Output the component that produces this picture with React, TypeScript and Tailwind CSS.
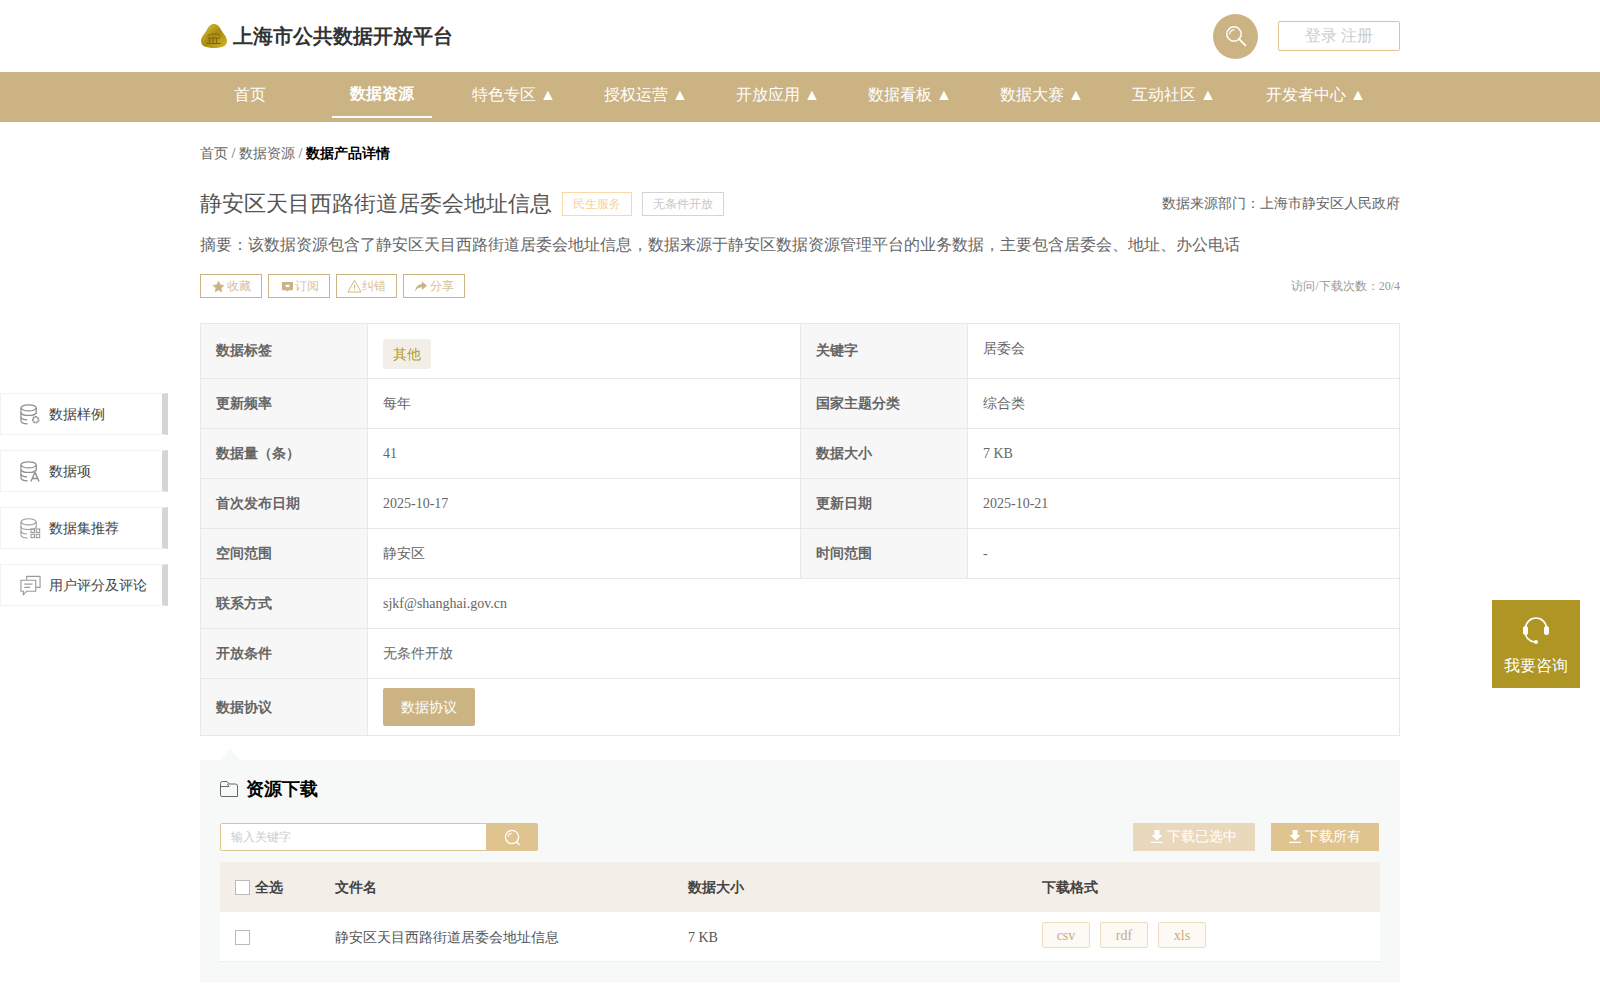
const navItems = [
  { label: "首页", w: "w-[100px]" },
  { label: "数据资源", w: "w-[100px]", active: true },
  { label: "特色专区 ▲", w: "w-[100px]" },
  { label: "授权运营 ▲", w: "w-[100px]" },
  { label: "开放应用 ▲", w: "w-[100px]" },
  { label: "数据看板 ▲", w: "w-[100px]" },
  { label: "数据大赛 ▲", w: "w-[100px]" },
  { label: "互动社区 ▲", w: "w-[100px]" },
  { label: "开发者中心 ▲", w: "w-[120px]" },
];

const DbBase = () => (
  <>
    <ellipse cx="9" cy="4" rx="8" ry="3.2" />
    <path d="M1 4v13.500c0 1.800 3 3.200 7 3.400" />
    <path d="M17 4v6" />
    <path d="M1 8.800c0 1.800 3.600 3.200 8 3.200s8-1.400 8-3.200" />
    <path d="M1 13.600c0 1.600 2.800 2.900 6.500 3.100" />
  </>
);

const IconSample = () => (
  <svg viewBox="0 0 22 22" fill="none" stroke="#8f8f8f" strokeWidth="1.3" className="size-[21px]">
    <DbBase />
    <circle cx="16.500" cy="16.500" r="3" strokeWidth="1.900" strokeDasharray="2 0.6" />
  </svg>
);

const IconItem = () => (
  <svg viewBox="0 0 22 22" fill="none" stroke="#8f8f8f" strokeWidth="1.3" className="size-[21px]">
    <DbBase />
    <path d="M11.500 21.500l3.800-9h.8l3.800 9M12.900 18.300h5.600" strokeWidth="1.500" />
  </svg>
);

const IconGrid = () => (
  <svg viewBox="0 0 22 22" fill="none" stroke="#9a9a9a" strokeWidth="1.100" className="size-[21px]">
    <DbBase />
    <rect x="11.500" y="11.500" width="3.600" height="3.600" />
    <rect x="17" y="11.500" width="3.600" height="3.600" />
    <rect x="11.500" y="17" width="3.600" height="3.600" />
    <rect x="17" y="17" width="3.600" height="3.600" />
  </svg>
);

const IconComment = () => (
  <svg viewBox="0 0 22 22" fill="none" stroke="#9a9a9a" strokeWidth="1.200" className="size-[21px]">
    <path d="M7 5V1.500h14V13h-4" />
    <path d="M1 5.500h15.500v11.500H7l-3.500 3.500V17H1z" />
    <path d="M4.500 9.500h8.500M4.500 13h6" />
  </svg>
);

const sideItems = [
  { label: "数据样例", icon: <IconSample /> },
  { label: "数据项", icon: <IconItem /> },
  { label: "数据集推荐", icon: <IconGrid /> },
  { label: "用户评分及评论", icon: <IconComment /> },
];

const Download = () => (
  <svg viewBox="0 0 12 13" fill="#fff" className="w-[12px] h-[13px]">
    <path d="M3.500 0h5v5h3L6 10.500 .5 5h3z" />
    <path d="M0 11.700h12V13H0z" />
  </svg>
);

const Loupe = ({ className }: { className: string }) => (
  <svg viewBox="0 0 22 22" fill="none" stroke="#fff" strokeLinecap="round" className={className}>
    <circle cx="9" cy="9" r="7.200" strokeWidth="1.500" />
    <path d="M4.800 9a4.200 4.200 0 0 1 4.200-4.200" strokeWidth="1.200" />
    <path d="M14.400 14.400l6 6" strokeWidth="1.800" />
  </svg>
);

const SmallLoupe = () => (
  <svg viewBox="0 0 18 18" fill="none" stroke="#fff" strokeLinecap="round" className="size-[17px]">
    <circle cx="8.500" cy="8.500" r="7" strokeWidth="1.400" />
    <path d="M4.500 8a4 4 0 0 1 3.500-3.500" strokeWidth="1.100" />
    <path d="M13.500 14l2.500 2.500" strokeWidth="1.400" />
  </svg>
);

const Label = ({ children, className = "" }: { children: React.ReactNode; className?: string }) => (
  <div className={`w-[167px] shrink-0 bg-[#f7f7f7] pl-[15px] font-bold text-[#666] flex items-center border-r border-[#e8e8e8] ${className}`}>
    {children}
  </div>
);

const Value = ({ children, className = "" }: { children: React.ReactNode; className?: string }) => (
  <div className={`pl-[15px] text-[#666] flex items-center ${className}`}>{children}</div>
);

const rows = [
  ["更新频率", "每年", "国家主题分类", "综合类"],
  ["数据量（条）", "41", "数据大小", "7 KB"],
  ["首次发布日期", "2025-10-17", "更新日期", "2025-10-21"],
  ["空间范围", "静安区", "时间范围", "-"],
];

const App = () => {
  return (
    // no CJK family named on purpose: the browser's own fallback is what gives the centred ：and ，of the picture
    <div className="relative min-h-[1000px] bg-white text-[14px] text-[#666] font-['Liberation_Serif',serif]">
      {/* Header */}
      <header className="w-[1200px] mx-auto h-[72px] flex items-center justify-between">
        <div className="flex items-center">
          <svg viewBox="0 0 28 26" className="w-[28px] h-[26px] mr-[5px]">
            <defs>
              <linearGradient id="gold" x1="0" y1="0" x2="1" y2="1">
                <stop offset="0" stopColor="#e4c93a" />
                <stop offset="0.5" stopColor="#a98a12" />
                <stop offset="1" stopColor="#d6b52a" />
              </linearGradient>
            </defs>
            <path d="M14 1c3.500 0 5.500 2.500 7.500 6.500 2 3.500 5.500 6.500 5.500 10.500 0 5-5 7-13 7S1 23 1 18c0-4 3.500-7 5.500-10.500C8.500 3.500 10.500 1 14 1z" fill="url(#gold)" />
            <path d="M7 13.500c2-3.500 12-3.500 14 0M8 15h12M9.500 15v5M13 15v5M16.500 15v5M7 20.500h14" stroke="#7d650f" strokeWidth="1" fill="none" />
          </svg>
          <span className="text-[20px] font-bold text-[#333]">上海市公共数据开放平台</span>
        </div>
        <div className="flex items-center">
          <div className="size-[45px] rounded-full bg-[#cbb384] flex items-center justify-center mr-[20px]">
            <Loupe className="size-[22px]" />
          </div>
          <div className="w-[122px] h-[30px] border border-[#e0c48f] rounded-[2px] flex items-center justify-center text-[16px] text-[#ccc]">
            登录 注册
          </div>
        </div>
      </header>

      {/* Nav */}
      <nav className="h-[50px] bg-[#cbb384]">
        <ul className="w-[1200px] mx-auto h-full flex gap-[32px]">
          {navItems.map((item) => (
            <li
              key={item.label}
              className={`${item.w} shrink-0 h-[46px] flex items-center justify-center whitespace-nowrap text-[16px] text-white ${
                item.active ? "font-bold border-b-2 border-white" : ""
              }`}
            >
              {item.label}
            </li>
          ))}
        </ul>
      </nav>

      <main className="w-[1200px] mx-auto">
        {/* Breadcrumb */}
        <div className="pt-[22px] leading-[20px]">
          首页 / 数据资源 / <span className="font-bold text-black">数据产品详情</span>
        </div>

        {/* Title */}
        <div className="mt-[24px] h-[30px] flex items-center">
          <h1 className="text-[22px] text-[#555] mr-[10px]">静安区天目西路街道居委会地址信息</h1>
          <span className="h-[24px] mt-[2px] px-[10px] border border-[#fad9a6] text-[12px] text-[#f7d39c] flex items-center mr-[10px]">民生服务</span>
          <span className="h-[24px] mt-[2px] px-[10px] border border-[#d4d4d4] text-[12px] text-[#c8c8c8] flex items-center">无条件开放</span>
          <span className="ml-auto text-[#666]">数据来源部门：上海市静安区人民政府</span>
        </div>

        {/* Summary */}
        <p className="mt-[14px] text-[16px] leading-[26px] text-[#666]">
          摘要：该数据资源包含了静安区天目西路街道居委会地址信息，数据来源于静安区数据资源管理平台的业务数据，主要包含居委会、地址、办公电话
        </p>

        {/* Actions */}
        <div className="mt-[16px] h-[24px] flex items-center gap-[6px] text-[12px] text-[#d5c19b]">
          <span className="w-[62px] h-[24px] border border-[#cbb384] flex items-center justify-center gap-[2px]">
            <svg viewBox="0 0 24 24" fill="#cbb384" className="size-[13px]">
              <path d="M12 1.500l3.400 6.900 7.600 1.100-5.500 5.400 1.300 7.600-6.800-3.600-6.800 3.600 1.300-7.600L1 9.500l7.600-1.100z" />
            </svg>
            收藏
          </span>
          <span className="w-[62px] h-[24px] pl-[2px] border border-[#cbb384] flex items-center justify-center gap-[2px]">
            <svg viewBox="0 0 12 12" className="size-[11px]">
              <path fillRule="evenodd" fill="#cbb384" d="M0 1h12v9H7.500L6 11.500 4.500 10H0zM4 4v2.500h4V4z" />
            </svg>
            订阅
          </span>
          <span className="w-[61px] h-[24px] border border-[#cbb384] flex items-center justify-center">
            <svg viewBox="0 0 16 15" fill="none" stroke="#cbb384" strokeWidth="1" className="w-[15px] h-[14px]">
              <path d="M8 1.500L15 14H1z" />
              <path d="M8 6v4.500M8 11.500v1" />
            </svg>
            纠错
          </span>
          <span className="w-[62px] h-[24px] pl-[1px] border border-[#cbb384] flex items-center justify-center gap-[3px]">
            <svg viewBox="0 0 14 12" fill="#cbb384" className="w-[12px] h-[11px]">
              <path d="M8 0l6 5-6 5V7C5 7 2.500 8 0 11.500 .8 6.500 3.500 3.500 8 3z" />
            </svg>
            分享
          </span>
          <span className="ml-auto text-[#999]">访问/下载次数：20/4</span>
        </div>

        {/* Detail table */}
        <div className="mt-[25px] border border-[#e8e8e8] border-b-0">
          <div className="flex h-[55px] border-b border-[#e8e8e8]">
            <Label className="pb-[2px]">数据标签</Label>
            <Value className="w-[433px] border-r border-[#e8e8e8]">
              <span className="w-[48px] h-[30px] mt-[6px] rounded-[3px] bg-[#f3efe8] text-[#b49a2a] flex items-center justify-center">其他</span>
            </Value>
            <Label className="pb-[2px]">关键字</Label>
            <Value className="flex-1"><span className="-mt-[5px]">居委会</span></Value>
          </div>
          {rows.map((r) => (
            <div key={r[0]} className="flex h-[50px] border-b border-[#e8e8e8]">
              <Label>{r[0]}</Label>
              <Value className="w-[433px] border-r border-[#e8e8e8]">{r[1]}</Value>
              <Label>{r[2]}</Label>
              <Value className="flex-1">{r[3]}</Value>
            </div>
          ))}
          <div className="flex h-[50px] border-b border-[#e8e8e8]">
            <Label>联系方式</Label>
            <Value className="flex-1">sjkf@shanghai.gov.cn</Value>
          </div>
          <div className="flex h-[50px] border-b border-[#e8e8e8]">
            <Label>开放条件</Label>
            <Value className="flex-1">无条件开放</Value>
          </div>
          <div className="flex h-[57px] border-b border-[#e8e8e8]">
            <Label>数据协议</Label>
            <Value className="flex-1">
              <span className="w-[92px] h-[38px] rounded-[2px] bg-[#cbb384] text-white flex items-center justify-center">数据协议</span>
            </Value>
          </div>
        </div>

        {/* Downloads */}
        <section className="relative mt-[24px] h-[222px] bg-[#f7f9f8] px-[20px]">
          <div className="absolute left-[20px] -top-[12px] w-0 h-0 border-x-[10px] border-x-transparent border-b-[12px] border-b-[#f7f9f8]" />
          <div className="h-[63px] pb-[5px] flex items-center">
            <svg viewBox="0 0 18 16" fill="none" stroke="#666" strokeWidth="1" className="w-[18px] h-[16px] mr-[8px]">
              <path d="M.5 14V2.500a2 2 0 0 1 2-2H7l2 2.500h6.500a2 2 0 0 1 2 2V15.500H2a1.500 1.500 0 0 1-1.500-1.500z" />
              <path d="M.5 5.500H9L7.500 3" />
            </svg>
            <h2 className="text-[18px] font-bold text-black">资源下载</h2>
          </div>
          <div className="flex items-center justify-between">
            <div className="flex h-[28px]">
              <div className="w-[267px] border border-[#e0c48f] rounded-l-[2px] bg-white pl-[10px] text-[12px] text-[#ccc] flex items-center">输入关键字</div>
              <div className="w-[51px] bg-[#e0c48f] rounded-r-[2px] flex items-center justify-center">
                <SmallLoupe />
              </div>
            </div>
            <div className="flex gap-[16px] mr-[1px]">
              <span className="w-[122px] h-[28px] pb-[1px] bg-[#e9d8bb] text-white flex items-center justify-center gap-[4px]"><Download />下载已选中</span>
              <span className="w-[108px] h-[28px] pb-[1px] bg-[#e0c48f] text-white flex items-center justify-center gap-[4px]"><Download />下载所有</span>
            </div>
          </div>

          <table className="mt-[11px] w-full table-fixed border-collapse">
            <thead>
              <tr className="h-[50px] bg-[#f3efe8] text-left font-bold text-[#444]">
                <th className="w-[115px] pl-[15px]">
                  <span className="flex items-center gap-[5px]">
                    <span className="size-[15px] border border-[#bbb] bg-white" />全选
                  </span>
                </th>
                <th className="w-[353px]">文件名</th>
                <th className="w-[354px]">数据大小</th>
                <th>下载格式</th>
              </tr>
            </thead>
            <tbody>
              <tr className="h-[49px] bg-white border-b border-[#f0eeea] text-[#555]">
                <td className="pl-[15px] pt-[2px]"><span className="block size-[15px] border border-[#bbb]" /></td>
                <td className="pt-[2px]">静安区天目西路街道居委会地址信息</td>
                <td className="pt-[2px]">7 KB</td>
                <td className="pt-[2px]">
                  <div className="flex gap-[10px] -mt-[4px]">
                    {["csv", "rdf", "xls"].map((f) => (
                      <span key={f} className="w-[48px] h-[26px] rounded-[2px] border border-[#ecdcc0] bg-[#fdf9f4] text-[#cbab7f] flex items-center justify-center">{f}</span>
                    ))}
                  </div>
                </td>
              </tr>
            </tbody>
          </table>
        </section>
      </main>

      {/* Floating side menu */}
      <aside className="absolute left-0 top-[393px] w-[168px] flex flex-col gap-[15px]">
        {sideItems.map((item) => (
          <div key={item.label} className="h-[42px] border border-[#f2f2f2] border-r-[6px] border-r-[#d5d5d5] bg-white flex items-center pl-[19px] text-[#444]">
            <span className="w-[29px] shrink-0">{item.icon}</span>
            {item.label}
          </div>
        ))}
      </aside>

      {/* Consult */}
      <div className="absolute left-[1492px] top-[600px] size-[88px] bg-[#ae9524] flex flex-col items-center text-white text-[16px]">
        <svg viewBox="0 0 28 28" fill="none" stroke="#fff" strokeWidth="1.600" className="size-[28px] mt-[17px] mb-[9px]">
          <path d="M3.500 14V11.500a10.500 10.500 0 0 1 21 0V14" />
          <path d="M3.500 15c0 6 3 9 9 10" />
          <rect x="1" y="9" width="5" height="9" rx="2.500" fill="#fff" stroke="none" />
          <rect x="22" y="9" width="5" height="9" rx="2.500" fill="#fff" stroke="none" />
          <circle cx="14" cy="25" r="2" fill="#fff" stroke="none" />
        </svg>
        我要咨询
      </div>
    </div>
  );
};

export default App;
